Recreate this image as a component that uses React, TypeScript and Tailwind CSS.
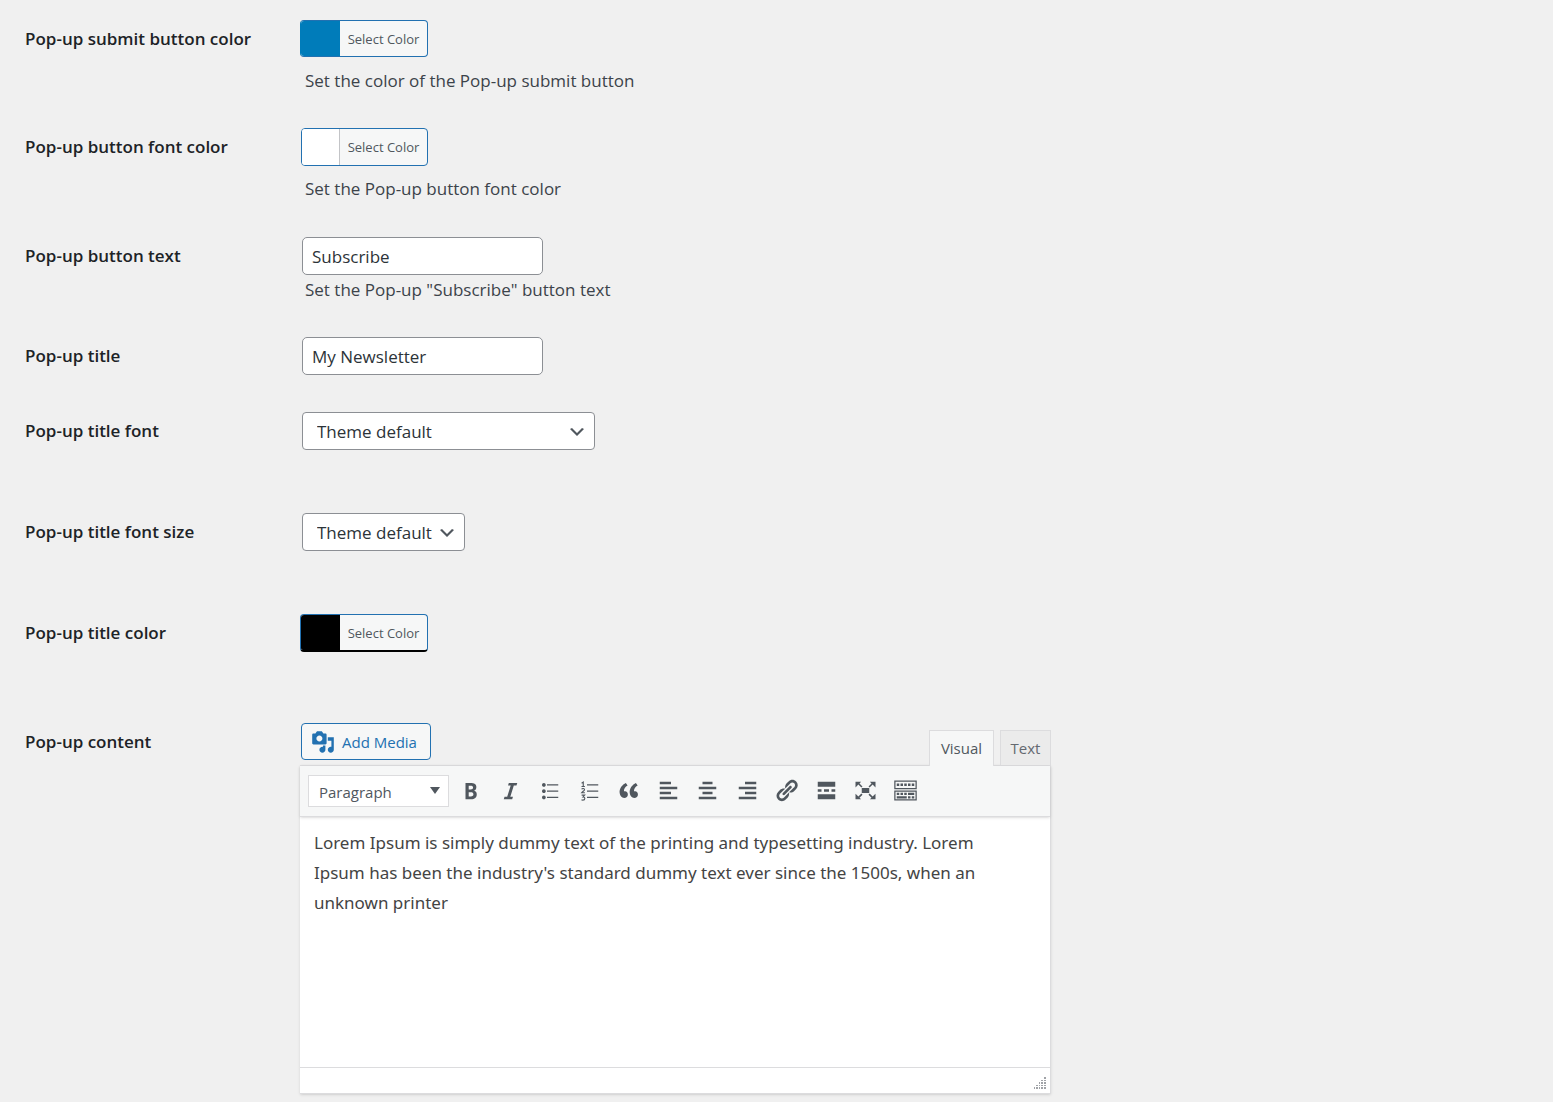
import React from 'react';

const SANS = "font-['Open_Sans','Noto_Sans',sans-serif]";

function Row({ label, htmlFor, className, children }: { label: string; htmlFor: string; className: string; children: React.ReactNode }) {
  return (
    <div className={`flex items-start ${className}`}>
      <label htmlFor={htmlFor} className="w-[275px] shrink-0 pt-[7px] text-[17px] leading-6 font-semibold text-[#1d2327]">
        {label}
      </label>
      <div className="min-w-0 flex-1">{children}</div>
    </div>
  );
}

function ColorButton({ id, frame, swatch }: { id: string; frame: string; swatch: string }) {
  return (
    <button id={id} type="button" className={`flex overflow-hidden rounded-[4px] border bg-[#f6f7f7] ${frame}`}>
      <span className={`h-full shrink-0 ${swatch}`} />
      <span className="flex-1 text-center text-[13px] leading-[37px] text-[#50575e]">Select Color</span>
    </button>
  );
}

function Description({ className, children }: { className: string; children: React.ReactNode }) {
  return <p className={`pl-[5px] text-[17px] leading-6 text-[#3c434a] ${className}`}>{children}</p>;
}

function TextBox({ id, value }: { id: string; value: string }) {
  return (
    <input
      id={id}
      type="text"
      defaultValue={value}
      className="ml-0.5 block h-[38px] w-[241px] rounded-[5px] border border-[#8c8f94] bg-white px-[9px] text-[17px] text-[#2c3338]"
    />
  );
}

function SelectBox({ id, width }: { id: string; width: string }) {
  return (
    <div className={`relative ml-0.5 ${width}`}>
      <select id={id} className="block h-[38px] w-full appearance-none rounded-[4px] border border-[#8c8f94] bg-white pt-0.5 pl-3.5 text-[17px] text-[#2c3338]">
        <option>Theme default</option>
      </select>
      <svg className="pointer-events-none absolute top-2.5 right-2 size-5" viewBox="0 0 20 20" fill="#50575e">
        <path d="M5 6l5 5 5-5 2 1-7 7-7-7 2-1z" />
      </svg>
    </div>
  );
}

const TOOLS: { name: string; shape: React.ReactNode }[] = [
  {
    name: 'Bold',
    shape: (
      <path d="M6 4v13h4.54c1.37 0 2.46-.33 3.26-1 .8-.66 1.2-1.58 1.2-2.77 0-.84-.17-1.51-.51-2.01s-.9-.85-1.67-1.03v-.09c.57-.1 1.02-.4 1.36-.9s.51-1.13.51-1.91c0-1.14-.39-1.98-1.17-2.5C12.75 4.26 11.5 4 9.78 4H6zm2.57 5.15V6.26h1.36c.73 0 1.27.11 1.61.32.34.22.51.58.51 1.07 0 .54-.16.92-.47 1.15s-.82.35-1.51.35h-1.5zm0 2.19h1.6c1.44 0 2.16.53 2.16 1.61 0 .6-.17 1.05-.51 1.34s-.86.43-1.57.43H8.57v-3.38z" />
    ),
  },
  { name: 'Italic', shape: <path d="M14.78 6h-2.13l-2.8 9h2.12l-.62 2H4.6l.62-2h2.14l2.8-9H8.03l.62-2h6.75z" /> },
  {
    name: 'Bulleted list',
    shape: (
      <path d="M5.5 7C4.67 7 4 6.33 4 5.5 4 4.68 4.67 4 5.5 4 6.32 4 7 4.68 7 5.5 7 6.33 6.32 7 5.5 7zM8 5h9v1H8V5zm-2.5 7c-.83 0-1.5-.67-1.5-1.5C4 9.68 4.67 9 5.5 9c.82 0 1.5.68 1.5 1.5 0 .83-.68 1.5-1.5 1.5zM8 10h9v1H8v-1zm-2.5 7c-.83 0-1.5-.67-1.5-1.5 0-.82.67-1.5 1.5-1.5.82 0 1.5.68 1.5 1.5 0 .83-.68 1.5-1.5 1.5zM8 15h9v1H8v-1z" />
    ),
  },
  {
    name: 'Numbered list',
    shape: (
      <>
        <path d="M8 5h9v1H8zM8 10h9v1H8zM8 15h9v1H8z" />
        <g fill="none" stroke="currentColor" strokeWidth="0.9">
          <path d="M3.7 4.2l1.3-.9v3.4M3.6 6.8h2.7" />
          <path d="M3.7 9c.5-.9 2.3-.8 2.3.3 0 .8-1.5 1.4-2.3 2.5h2.6" />
          <path d="M3.7 13.7h2.4L4.8 15.2c1.9-.1 2 2.5-.1 2.5-.5 0-.8-.1-1.1-.3" />
        </g>
      </>
    ),
  },
  {
    name: 'Blockquote',
    shape: (
      <path d="M9.49 13.22c0-.74-.2-1.38-.61-1.9-.62-.78-1.83-.88-2.53-.72-.29-1.65 1.11-3.75 2.92-4.65L7.88 4c-2.73 1.3-5.42 4.28-4.96 8.05C3.21 14.43 4.59 16 6.54 16c.85 0 1.56-.25 2.12-.75s.83-1.18.83-2.03zm8.05 0c0-.74-.2-1.38-.61-1.9-.63-.78-1.83-.88-2.53-.72-.29-1.65 1.11-3.75 2.92-4.65L15.93 4c-2.73 1.3-5.41 4.28-4.95 8.05.29 2.38 1.66 3.95 3.61 3.95.85 0 1.56-.25 2.12-.75s.83-1.18.83-2.03z" />
    ),
  },
  { name: 'Align left', shape: <path d="M12 5V3H3v2h9zm5 4V7H3v2h14zm-5 4v-2H3v2h9zm5 4v-2H3v2h14z" /> },
  { name: 'Align center', shape: <path d="M14 5V3H6v2h8zm3 4V7H3v2h14zm-3 4v-2H6v2h8zm3 4v-2H3v2h14z" /> },
  { name: 'Align right', shape: <path d="M17 5V3H8v2h9zm0 4V7H3v2h14zm0 4v-2H8v2h9zm0 4v-2H3v2h14z" /> },
  {
    name: 'Insert link',
    shape: (
      <path d="M17.74 2.76c1.68 1.69 1.68 4.41 0 6.1l-1.53 1.52c-1.12 1.12-2.7 1.47-4.14 1.09l2.62-2.61.76-.77.76-.76c.84-.84.84-2.2 0-3.04-.84-.85-2.2-.85-3.04 0l-.77.76-3.38 3.38c-.37-1.44-.02-3.02 1.1-4.14l1.52-1.53c1.69-1.68 4.42-1.68 6.1 0zM8.59 13.43l5.34-5.34c.42-.42.42-1.1 0-1.52-.44-.43-1.13-.39-1.53 0l-5.33 5.34c-.42.42-.42 1.1 0 1.52.44.43 1.13.39 1.52 0zm-.76 2.29l4.14-4.15c.38 1.44.03 3.02-1.09 4.14l-1.52 1.53c-1.69 1.68-4.41 1.68-6.1 0-1.68-1.68-1.68-4.42 0-6.1l1.53-1.52c1.12-1.12 2.7-1.47 4.14-1.1l-4.14 4.15c-.85.84-.85 2.2 0 3.05.84.84 2.2.84 3.04 0z" />
    ),
  },
  { name: 'Read more', shape: <path d="M17 7V3H3v4h14zM6 11V9H3v2h3zm6 0V9H8v2h4zm5 0V9h-3v2h3zm0 6v-4H3v4h14z" /> },
  {
    name: 'Fullscreen',
    shape: (
      <path d="M7 8h6v4H7zM2 3h4.5L5.2 4.3 7.6 6.7 6.7 7.6 4.3 5.2 2 7.5zM18 3v4.5l-2.3-2.3-2.4 2.4-.9-.9 2.4-2.4L13.5 3zM2 17v-4.5l2.3 2.3 2.4-2.4.9.9-2.4 2.4L6.5 17zM18 17h-4.5l1.3-1.3-2.4-2.4.9-.9 2.4 2.4 2.3-2.3z" />
    ),
  },
  {
    name: 'Toolbar toggle',
    shape: (
      <>
        <path fillRule="evenodd" d="M1 2h18v7H1zm1 1v5h16V3zM1 10h18v8H1zm1 1v6h16v-6z" />
        <path d="M3 4.4h2v2H3zM6 4.4h2v2H6zM9 4.4h2v2H9zM12 4.4h2v2h-2zM15 4.4h2v2h-2zM3 11.8h2v1.8H3zM6 11.8h2v1.8H6zM9 11.8h2v1.8H9zM12 11.8h5v1.8h-5zM3 14.6h8v1.8H3zM12 14.6h2v1.8h-2zM15 14.6h2v1.8h-2z" />
      </>
    ),
  },
];

function Editor() {
  return (
    <div className="w-full max-w-[751px]">
      <div className="flex items-end justify-between">
        <button type="button" className="mb-[5px] ml-px flex h-[37px] w-[130px] items-center gap-[7px] rounded-[4px] border border-[#2271b1] bg-[#f6f7f7] pt-px pl-[9px] text-[15px] whitespace-nowrap text-[#2271b1]">
          <svg className="size-6 shrink-0" viewBox="0 0 20 20" fill="currentColor">
            <path d="M13 11V4c0-.55-.45-1-1-1h-1.67L9 1H5L3.67 3H2c-.55 0-1 .45-1 1v7c0 .55.45 1 1 1h10c.55 0 1-.45 1-1zM7 4.5c1.38 0 2.5 1.12 2.5 2.5S8.38 9.5 7 9.5 4.5 8.38 4.5 7 5.62 4.5 7 4.5zM14 6h5v10.5c0 1.38-1.12 2.5-2.5 2.5S14 17.88 14 16.5s1.12-2.5 2.5-2.5c.17 0 .34.02.5.05V9h-3V6zm-4 8.05V13h2v3.5c0 1.38-1.12 2.5-2.5 2.5S7 17.88 7 16.5 8.12 14 9.5 14c.17 0 .34.02.5.05z" />
          </svg>
          Add Media
        </button>
        <div className="relative flex items-end gap-1.5 text-[15px]">
          <button type="button" className="-mb-px h-9 w-[65px] border border-b-0 border-[#dcdcde] bg-[#f6f7f7] text-[#50575e]">Visual</button>
          <button type="button" className="h-[35px] w-[51px] border border-b-0 border-[#dcdcde] bg-[#ebebeb] pt-px text-[#646970]">Text</button>
        </div>
      </div>
      <div className="border border-l-0 border-[#dcdcde] bg-white shadow-sm">
        <div className="flex h-[51px] items-center gap-[9px] border-b border-[#dcdcde] bg-[#f6f7f7] pl-2 shadow-sm">
          <div className="relative w-[141px]">
            <select aria-label="Paragraph format" className="block h-8 w-full appearance-none border border-[#dcdcde] bg-white pt-0.5 pl-2.5 text-[15px] text-[#50575e]">
              <option>Paragraph</option>
            </select>
            <svg className="pointer-events-none absolute top-3 right-2 h-2 w-3" viewBox="0 0 12 8" fill="#50575e">
              <path d="M1 0h10L6 7z" />
            </svg>
          </div>
          <div className="flex w-[461px] justify-between pb-0.5 text-[#50575e]">
            {TOOLS.map((t) => (
              <button key={t.name} type="button" aria-label={t.name} className="size-[26px]">
                <svg className="size-[25px]" viewBox="0 0 20 20" fill="currentColor">
                  {t.shape}
                </svg>
              </button>
            ))}
          </div>
        </div>
        <div
          id="content"
          role="textbox"
          aria-multiline="true"
          contentEditable
          suppressContentEditableWarning
          className="h-[250px] pt-[11px] pr-10 pl-3.5 font-['Noto_Sans',sans-serif] text-[17px] leading-[30px] text-[#444444]"
        >
          Lorem Ipsum is simply dummy text of the printing and typesetting industry. Lorem Ipsum has been the industry's standard dummy text ever since the 1500s, when an unknown printer
        </div>
        <div className="flex h-[26px] items-end justify-end border-t border-[#dcdcde] pr-1 pb-1">
          <svg className="size-3" viewBox="0 0 12 12" fill="#a0a3a7">
            <path d="M10 0h2v2h-2zM7 3h2v1H7zM10 3h2v1h-2zM5 5h1v2H5zM7 5h2v2H7zM10 5h2v2h-2zM2 8h2v1H2zM5 8h1v1H5zM7 8h2v1H7zM10 8h2v1h-2zM0 10h1v2H0zM2 10h2v2H2zM5 10h1v2H5zM7 10h2v2H7zM10 10h2v2h-2z" />
          </svg>
        </div>
      </div>
    </div>
  );
}

export default function App() {
  return (
    <main className={`min-h-screen bg-[#f0f0f0] px-[25px] pt-5 pb-2 ${SANS}`}>
      <Row label="Pop-up submit button color" htmlFor="submit-color" className="pb-[35px]">
        <ColorButton id="submit-color" frame="h-[37px] w-32 border-[#2271b1] border-l-[#007cba]" swatch="-ml-px w-10 bg-[#007cba]" />
        <Description className="pt-3">Set the color of the Pop-up submit button</Description>
      </Row>
      <Row label="Pop-up button font color" htmlFor="font-color" className="pb-9">
        <ColorButton id="font-color" frame="ml-px h-[38px] w-[127px] border-[#2271b1]" swatch="w-[38px] border-r border-[#c3c4c7] bg-white" />
        <Description className="pt-[11px]">Set the Pop-up button font color</Description>
      </Row>
      <Row label="Pop-up button text" htmlFor="button-text" className="pb-[35px]">
        <TextBox id="button-text" value="Subscribe" />
        <Description className="pt-[3px]">Set the Pop-up "Subscribe" button text</Description>
      </Row>
      <Row label="Pop-up title" htmlFor="title" className="pb-[37px]">
        <TextBox id="title" value="My Newsletter" />
      </Row>
      <Row label="Pop-up title font" htmlFor="title-font" className="pb-[63px]">
        <SelectBox id="title-font" width="w-[293px]" />
      </Row>
      <Row label="Pop-up title font size" htmlFor="title-size" className="pb-[63px]">
        <SelectBox id="title-size" width="w-[163px]" />
      </Row>
      <Row label="Pop-up title color" htmlFor="title-color" className="pb-[71px]">
        <ColorButton id="title-color" frame="h-[38px] w-32 border-b-2 border-[#2271b1] border-b-black" swatch="-ml-px w-10 bg-black" />
      </Row>
      <Row label="Pop-up content" htmlFor="content" className="">
        <Editor />
      </Row>
    </main>
  );
}
